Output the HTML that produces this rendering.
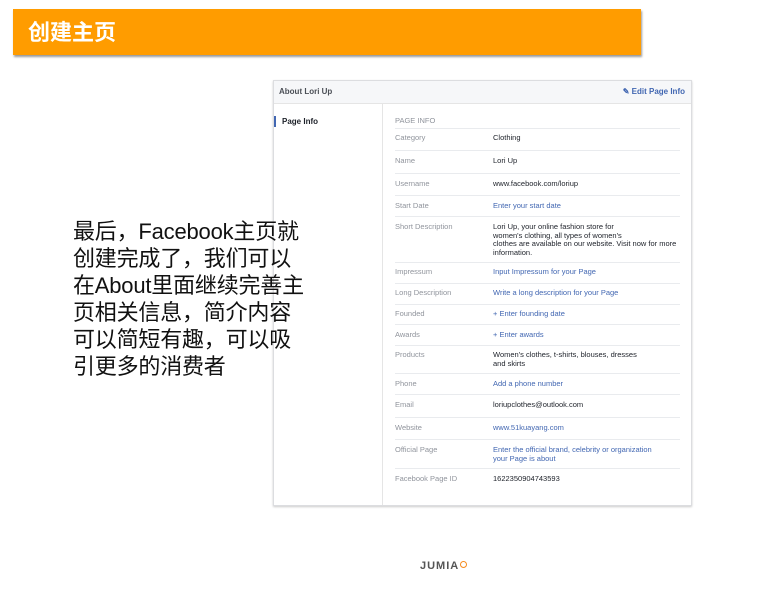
<!DOCTYPE html>
<html><head><meta charset="utf-8"><style>
body{margin:0;width:761px;height:609px;background:#fff;position:relative;overflow:hidden;font-family:"Liberation Sans",Arial,sans-serif}
.bar{position:absolute;left:13px;top:9px;width:628px;height:46px;background:#ff9c00;box-shadow:1px 2px 2px #999}
.bar span{position:absolute;left:15px;top:7px;color:#fff;font:bold 22px "Noto Sans CJK SC",sans-serif;line-height:30px}
.txt{position:absolute;z-index:2;left:73px;top:218px;font:22px "Liberation Sans","Noto Sans CJK SC",sans-serif;line-height:27px;color:#111;white-space:nowrap;letter-spacing:-0.2px}
.panel{position:absolute;left:273px;top:80px;width:417px;height:424px;border:1px solid #dcdde0;background:#fff;box-shadow:0 1px 2px #ccc}
.hd{height:22px;background:#f6f7f9;border-bottom:1px solid #e5e5e5;font-size:8px;font-weight:bold;color:#4b4f56;line-height:22px;padding-left:5px}
.hd a{position:absolute;right:6px;top:0;color:#4267b2;font-weight:bold}
.side{position:absolute;left:0;top:23px;width:108px;bottom:0;border-right:1px solid #e5e5e5}
.side div{position:absolute;left:0;top:12px;font-size:8px;font-weight:bold;color:#1d2129;border-left:2px solid #4267b2;padding-left:6px;line-height:11px}
.r{position:absolute;left:121px;width:285px;font-size:7.5px;line-height:8.5px}
.r b{font-weight:normal;color:#90949c;position:absolute;left:0;top:0}
.r i{font-style:normal;position:absolute;left:98px;top:0;width:190px;color:#1d2129}
.r i.l{color:#4267b2}
.ln{position:absolute;left:121px;width:285px;border-top:1px solid #e9ebee}
.jm{position:absolute;left:420px;top:560px;font:bold 11px "Liberation Sans",sans-serif;color:#555;letter-spacing:1px}
.jm span{display:inline-block;width:5px;height:5px;border:1.5px solid #f68b1e;border-radius:50%;vertical-align:1px;margin-left:1px}
</style></head><body>
<div class="bar"><span>创建主页</span></div>
<div class="txt">最后，Facebook主页就<br>创建完成了，我们可以<br>在About里面继续完善主<br>页相关信息，简介内容<br>可以简短有趣，可以吸<br>引更多的消费者</div>
<div class="panel">
<div class="hd">About Lori Up<a>✎ Edit Page Info</a></div>
<div class="side"><div>Page Info</div></div>
<div class="r" style="top:36px"><b>PAGE INFO</b></div>
<div class="ln" style="top:47px"></div>
<div class="r" style="top:53px"><b>Category</b><i>Clothing</i></div>
<div class="ln" style="top:69px"></div>
<div class="r" style="top:76px"><b>Name</b><i>Lori Up</i></div>
<div class="ln" style="top:92px"></div>
<div class="r" style="top:99px"><b>Username</b><i>www.facebook.com/loriup</i></div>
<div class="ln" style="top:114px"></div>
<div class="r" style="top:121px"><b>Start Date</b><i class="l">Enter your start date</i></div>
<div class="ln" style="top:135px"></div>
<div class="r" style="top:142px"><b>Short Description</b><i>Lori Up, your online fashion store for<br>women's clothing, all types of women's<br>clothes are available on our website. Visit now for more information.</i></div>
<div class="ln" style="top:181px"></div>
<div class="r" style="top:187px"><b>Impressum</b><i class="l">Input Impressum for your Page</i></div>
<div class="ln" style="top:202px"></div>
<div class="r" style="top:208px"><b>Long Description</b><i class="l">Write a long description for your Page</i></div>
<div class="ln" style="top:223px"></div>
<div class="r" style="top:229px"><b>Founded</b><i class="l">+ Enter founding date</i></div>
<div class="ln" style="top:243px"></div>
<div class="r" style="top:250px"><b>Awards</b><i class="l">+ Enter awards</i></div>
<div class="ln" style="top:264px"></div>
<div class="r" style="top:270px"><b>Products</b><i>Women's clothes, t-shirts, blouses, dresses<br>and skirts</i></div>
<div class="ln" style="top:292px"></div>
<div class="r" style="top:299px"><b>Phone</b><i class="l">Add a phone number</i></div>
<div class="ln" style="top:313px"></div>
<div class="r" style="top:320px"><b>Email</b><i>loriupclothes@outlook.com</i></div>
<div class="ln" style="top:336px"></div>
<div class="r" style="top:343px"><b>Website</b><i class="l">www.51kuayang.com</i></div>
<div class="ln" style="top:358px"></div>
<div class="r" style="top:365px"><b>Official Page</b><i class="l">Enter the official brand, celebrity or organization<br>your Page is about</i></div>
<div class="ln" style="top:387px"></div>
<div class="r" style="top:394px"><b>Facebook Page ID</b><i>1622350904743593</i></div>
</div>
<div class="jm">JUMIA<span></span></div>
</body></html>
